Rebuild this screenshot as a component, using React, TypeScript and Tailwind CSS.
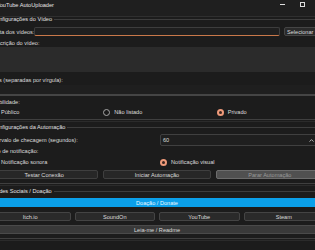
import React from "react";

function GroupTitle({ text }: { text: string }) {
  return (
    <div className="h-[4px] flex items-center ml-[2px]">
      <span className="whitespace-nowrap leading-[6px] text-[#e2e2e2]">{text}</span>
      <div className="flex-1 h-px bg-[#3d3d3d] ml-[2px]" />
    </div>
  );
}

function Radio({ checked, label }: { checked?: boolean; label: string }) {
  return (
    <div className="flex items-center gap-[4px]">
      {checked ? (
        <span className="w-[7px] h-[7px] shrink-0 rounded-full bg-[#ee9a7a] flex items-center justify-center">
          <span className="w-[3px] h-[3px] rounded-full bg-[#3a2620]" />
        </span>
      ) : (
        <span className="w-[7px] h-[7px] shrink-0 rounded-full border border-[#a8a8a8] bg-[#1a1a1a]" />
      )}
      <span className="whitespace-nowrap">{label}</span>
    </div>
  );
}

function Btn({ children, cls }: { children: React.ReactNode; cls?: string }) {
  return (
    <div
      className={
        "h-full flex items-center justify-center rounded-[2px] border whitespace-nowrap " +
        (cls ?? "bg-[#272727] border-[#3f3f3f]")
      }
    >
      {children}
    </div>
  );
}

function Lines() {
  return (
    <>
      <div className="h-px bg-[#3f3f3f]" />
      <div className="h-px mt-[1px] bg-[#2b2b2b]" />
    </>
  );
}

export default function App() {
  return (
    <div className="w-[315px] h-[250px] overflow-hidden bg-[#1c1c1c] text-[#dcdcdc] text-[5.6px] leading-[6px] [font-family:'Liberation_Sans',Arial,sans-serif]">
      {/* title bar */}
      <div className="h-[17px] border-b border-[#2f2f2f] bg-[#1f1f1f] flex items-start pt-[1.5px]">
        <span className="ml-[-3.5px] leading-[6px] whitespace-nowrap text-[#e6e6e6]">YouTube AutoUploader</span>
        <div className="ml-auto mt-[2px] w-[5px] h-px bg-[#dddddd]" />
        <div className="ml-[15px] mr-[10px] w-[5px] h-[5px] border border-[#dddddd]" />
      </div>

      <div className="ml-[-10px] w-[334px]">
        {/* Group 1 */}
        <GroupTitle text="Configurações do Vídeo" />
        <div className="mt-[6px] h-[9px] flex items-center">
          <span className="w-[44px] shrink-0 whitespace-nowrap">Pasta dos vídeos:</span>
          <div className="w-[246px] shrink-0 h-full rounded-[2px] border border-[#3d3d3d] border-b-[#c9784a] bg-[#1f1f1f]" />
          <div className="ml-[4px] w-[52px] shrink-0 h-full rounded-[2px] border border-[#454545] bg-[#2a2a2a] flex items-center pl-[2px] whitespace-nowrap">
            Selecionar Pasta
          </div>
        </div>
        <div className="mt-[3px] h-[8px] flex items-center">Descrição do vídeo:</div>
        <div className="h-[25px] w-[344px] bg-[#2b2b2b]" />
        <div className="mt-[4px] h-[8px] flex items-center">Tags (separadas por vírgula):</div>
        <div className="mt-[1px] h-[11px] w-[344px] bg-[#1f1f1f] border-b-2 border-[#454545]" />
        <div className="mt-[2px] h-[8px] flex items-center">Visibilidade:</div>
        <div className="mt-[2px] h-[8px] w-[340px] grid grid-cols-3 items-center">
          <Radio label="Público" />
          <Radio label="Não listado" />
          <Radio checked label="Privado" />
        </div>
        <div className="mt-[3px] w-[344px]">
          <Lines />
        </div>

        {/* Group 2 */}
        <div className="mt-[3px]">
          <GroupTitle text="Configurações da Automação" />
        </div>
        <div className="mt-[5px] h-[12px] flex items-center">
          <span className="w-[170px] shrink-0 whitespace-nowrap">Intervalo de checagem (segundos):</span>
          <div className="w-[174px] shrink-0 h-full rounded-[2px] border border-[#404040] bg-[#1f1f1f] flex items-center pl-[2px]">
            <span>60</span>
            <svg className="ml-auto mr-[19px]" width="5" height="3" viewBox="0 0 5 3">
              <path d="M0.5 2.6 L2.5 0.6 L4.5 2.6" fill="none" stroke="#cfcfcf" strokeWidth="0.8" />
            </svg>
          </div>
        </div>
        <div className="mt-[1px] h-[8px] flex items-center">Tipo de notificação:</div>
        <div className="mt-[3px] h-[8px] w-[340px] grid grid-cols-2 items-center">
          <Radio label="Notificação sonora" />
          <Radio checked label="Notificação visual" />
        </div>
        <div className="mt-[4px] h-[9px] grid grid-cols-3 gap-x-[4.5px]">
          <Btn>Testar Conexão</Btn>
          <Btn>Iniciar Automação</Btn>
          <Btn cls="bg-[#505050] border-[#6c6c6c] text-[#9a9a9a]">Parar Automação</Btn>
        </div>
        <div className="mt-[4px] w-[344px]">
          <Lines />
        </div>

        {/* Group 3 */}
        <div className="mt-[3px]">
          <GroupTitle text="Redes Sociais / Doação" />
        </div>
        <div className="mt-[5px] h-[9px]">
          <Btn cls="bg-[#0ba0ea] border-[#0ba0ea] text-[#eef8ff]">Doação / Donate</Btn>
        </div>
        <div className="mt-[5px] h-[9px] grid grid-cols-4 gap-x-[4px]">
          <Btn cls="bg-[#2a2a2a] border-[#444444]">Itch.io</Btn>
          <Btn cls="bg-[#2a2a2a] border-[#444444]">SoundOn</Btn>
          <Btn cls="bg-[#2a2a2a] border-[#444444]">YouTube</Btn>
          <Btn cls="bg-[#2a2a2a] border-[#444444]">Steam</Btn>
        </div>
        <div className="mt-[4px] h-[9px]">
          <Btn cls="bg-[#393939] border-[#4a4a4a]">Leia-me / Readme</Btn>
        </div>
        <div className="mt-[4px] w-[344px]">
          <Lines />
        </div>
      </div>
    </div>
  );
}
